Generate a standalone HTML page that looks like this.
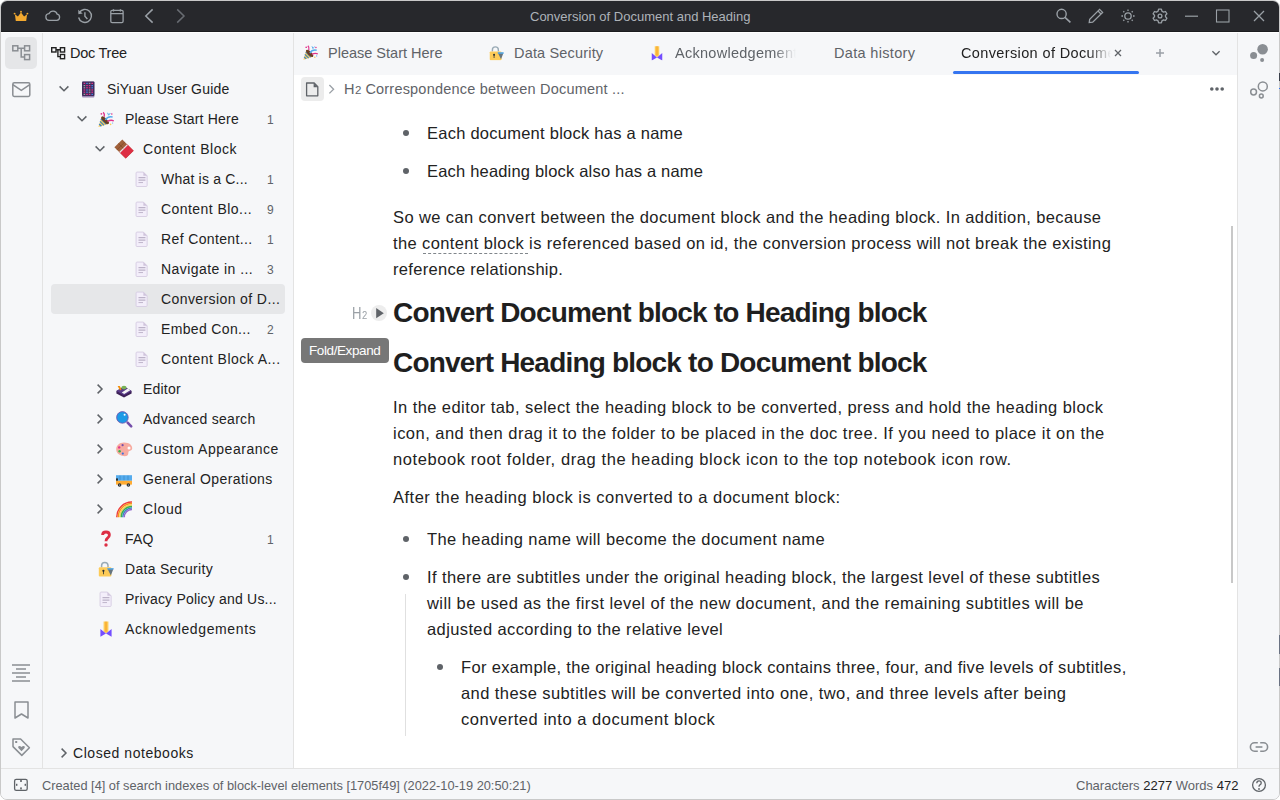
<!DOCTYPE html>
<html><head><meta charset="utf-8">
<style>
*{box-sizing:border-box;margin:0;padding:0}
html,body{width:1280px;height:800px;overflow:hidden;background:#fff}
body{position:relative;font-family:"Liberation Sans",sans-serif;color:#222}
.a{position:absolute}
.t{position:absolute;white-space:nowrap;line-height:20px}
#win{position:absolute;left:0;top:0;width:1280px;height:800px;border:1px solid #c9c9c9;border-radius:7px;overflow:hidden;background:#f6f7f9}
#bar{position:absolute;left:0;top:0;width:1278px;height:31px;background:#27282c;border-bottom:1px solid #1b1c1f}
#barhl{position:absolute;left:0;top:31px;width:1278px;height:1px;background:#fff}
.dockL{position:absolute;left:0;top:32px;width:42px;height:736px;border-right:1px solid #e3e3e3;background:#f6f7f9}
.side{position:absolute;left:42px;top:32px;width:251px;height:736px;border-right:1px solid #e3e3e3;background:#f6f7f9}
.tabs{position:absolute;left:293px;top:32px;width:944px;height:42px;background:#f6f7f9}
.editor{position:absolute;left:293px;top:74px;width:944px;height:694px;background:#fff}
.dockR{position:absolute;left:1236px;top:32px;width:42px;height:736px;border-left:1px solid #e3e3e3;background:#f6f7f9}
.status{position:absolute;left:0;top:767px;width:1278px;height:31px;border-top:1px solid #e3e3e3;background:#f6f7f9}
.tree{font-size:14px;color:#222;letter-spacing:0.2px}
.cnt{font-size:12px;color:#5f6368}
.p{font-size:16.5px;color:#222;line-height:26px;letter-spacing:0.42px}
.h2{font-size:28px;font-weight:bold;color:#1f1f1f;line-height:36px;letter-spacing:-0.8px}
.tab{font-size:14.5px;color:#5f6368}
svg{position:absolute;overflow:visible}
</style></head><body>
<div id="win">
  <div id="bar"></div>
  <div id="barhl"></div>
  <div class="dockL"></div>
  <div class="side"></div>
  <div class="tabs"></div>
  <div class="editor"></div>
  <div class="dockR"></div>
  <div class="status"></div>
</div>

<!-- title -->
<div class="t" style="left:530px;top:7px;font-size:13px;color:#aeb3b9;letter-spacing:0px">Conversion of Document and Heading</div>

<!-- sidebar header -->
<div class="t" style="left:70px;top:43px;font-size:14.5px;color:#222;letter-spacing:-0.25px">Doc Tree</div>

<!-- tree rows -->
<div class="t tree" style="left:107px;top:79px">SiYuan User Guide</div>
<div class="t tree" style="left:125px;top:109px">Please Start Here</div><div class="t cnt" style="left:267px;top:110px">1</div>
<div class="t tree" style="left:143px;top:139px;letter-spacing:0.533px">Content Block</div>
<div class="a" style="left:51px;top:284px;width:234px;height:30px;background:#e6e7e9;border-radius:4px"></div>
<div class="t tree" style="left:161px;top:169px">What is a C...</div><div class="t cnt" style="left:267px;top:170px">1</div>
<div class="t tree" style="left:161px;top:199px;letter-spacing:0.446px">Content Blo...</div><div class="t cnt" style="left:267px;top:200px">9</div>
<div class="t tree" style="left:161px;top:229px;letter-spacing:0.369px">Ref Content...</div><div class="t cnt" style="left:267px;top:230px">1</div>
<div class="t tree" style="left:161px;top:259px;letter-spacing:0.436px">Navigate in ...</div><div class="t cnt" style="left:267px;top:260px">3</div>
<div class="t tree" style="left:161px;top:289px;letter-spacing:0.400px">Conversion of D...</div>
<div class="t tree" style="left:161px;top:319px;letter-spacing:0.345px">Embed Con...</div><div class="t cnt" style="left:267px;top:320px">2</div>
<div class="t tree" style="left:161px;top:349px;letter-spacing:0.459px">Content Block A...</div>
<div class="t tree" style="left:143px;top:379px">Editor</div>
<div class="t tree" style="left:143px;top:409px;letter-spacing:0.286px">Advanced search</div>
<div class="t tree" style="left:143px;top:439px;letter-spacing:0.531px">Custom Appearance</div>
<div class="t tree" style="left:143px;top:469px;letter-spacing:0.418px">General Operations</div>
<div class="t tree" style="left:143px;top:499px;letter-spacing:0.625px">Cloud</div>
<div class="t tree" style="left:125px;top:529px">FAQ</div><div class="t cnt" style="left:267px;top:530px">1</div>
<div class="t tree" style="left:125px;top:559px;letter-spacing:0.300px">Data Security</div>
<div class="t tree" style="left:125px;top:589px">Privacy Policy and Us...</div>
<div class="t tree" style="left:125px;top:619px;letter-spacing:0.617px">Acknowledgements</div>
<div class="t tree" style="left:73px;top:743px;letter-spacing:0.547px">Closed notebooks</div>

<!-- tabs -->
<div class="t tab" style="left:328px;top:43px">Please Start Here</div>
<div class="t tab" style="left:514px;top:43px;letter-spacing:0.17px">Data Security</div>
<div class="t tab" style="left:675px;top:43px;width:121px;overflow:hidden;letter-spacing:0.27px;-webkit-mask-image:linear-gradient(to right,#000 82%,transparent 100%);mask-image:linear-gradient(to right,#000 82%,transparent 100%)">Acknowledgements</div>
<div class="t tab" style="left:834px;top:43px;letter-spacing:0.33px">Data history</div>
<div class="t tab" style="left:961px;top:43px;color:#222;width:150px;overflow:hidden;letter-spacing:0.37px;-webkit-mask-image:linear-gradient(to right,#000 85%,transparent 100%);mask-image:linear-gradient(to right,#000 85%,transparent 100%)">Conversion of Document</div>
<div class="a" style="left:953px;top:71px;width:186px;height:3px;background:#3575f0;border-radius:2px"></div>

<!-- breadcrumb -->
<div class="a" style="left:301px;top:77px;width:23px;height:24px;background:#ececec;border-radius:4px"></div>
<div class="t" style="left:344px;top:79px;font-size:14.5px;color:#5f6368">H<span style="font-size:11.5px;margin-left:0.5px">2</span><span style="margin-left:4px;letter-spacing:0.2px">Correspondence between Document ...</span></div>

<!-- editor content -->
<div class="t p" style="left:427px;top:120px;letter-spacing:0.248px">Each document block has a name</div>
<div class="t p" style="left:427px;top:158px;letter-spacing:0.190px">Each heading block also has a name</div>
<div class="t p" style="left:393px;top:204px;letter-spacing:0.399px">So we can convert between the document block and the heading block. In addition, because</div>
<div class="t p" style="left:393px;top:230px;letter-spacing:0.377px">the content block is referenced based on id, the conversion process will not break the existing</div>
<div class="t p" style="left:393px;top:256px;letter-spacing:0.302px">reference relationship.</div>
<div class="t h2" style="left:393px;top:295px">Convert Document block to Heading block</div>
<div class="t h2" style="left:393px;top:345px">Convert Heading block to Document block</div>
<div class="t p" style="left:393px;top:394px;letter-spacing:0.428px">In the editor tab, select the heading block to be converted, press and hold the heading block</div>
<div class="t p" style="left:393px;top:420px;letter-spacing:0.472px">icon, and then drag it to the folder to be placed in the doc tree. If you need to place it on the</div>
<div class="t p" style="left:393px;top:446px;letter-spacing:0.587px">notebook root folder, drag the heading block icon to the top notebook icon row.</div>
<div class="t p" style="left:393px;top:484px;letter-spacing:0.499px">After the heading block is converted to a document block:</div>
<div class="t p" style="left:427px;top:526px;letter-spacing:0.420px">The heading name will become the document name</div>
<div class="t p" style="left:427px;top:564px;letter-spacing:0.393px">If there are subtitles under the original heading block, the largest level of these subtitles</div>
<div class="t p" style="left:427px;top:590px;letter-spacing:0.419px">will be used as the first level of the new document, and the remaining subtitles will be</div>
<div class="t p" style="left:427px;top:616px;letter-spacing:0.387px">adjusted according to the relative level</div>
<div class="t p" style="left:461px;top:654px;letter-spacing:0.340px">For example, the original heading block contains three, four, and five levels of subtitles,</div>
<div class="t p" style="left:461px;top:680px;letter-spacing:0.420px">and these subtitles will be converted into one, two, and three levels after being</div>
<div class="t p" style="left:461px;top:706px;letter-spacing:0.537px">converted into a document block</div>

<!-- status -->
<div class="t" style="left:42px;top:776px;font-size:12.8px;color:#5f6368">Created [4] of search indexes of block-level elements [1705f49] (2022-10-19 20:50:21)</div>
<div class="t" style="left:1076px;top:776px;font-size:13px;color:#5f6368">Characters <span style="color:#222">2277</span> Words <span style="color:#222">472</span></div>

<!-- top bar icons -->
<svg class="a" style="left:0;top:0" width="1280" height="32" viewBox="0 0 1280 32">
  <!-- crown -->
  <path d="M14.9 14.2 L17.9 16.6 L21 12.6 L24.1 16.6 L27.1 14.2 L26.2 20.9 L15.8 20.9 Z" fill="#f3a92f"/>
  <circle cx="14.6" cy="13.6" r="0.95" fill="#f3a92f"/><circle cx="21" cy="11.8" r="0.95" fill="#f3a92f"/><circle cx="27.4" cy="13.6" r="0.95" fill="#f3a92f"/>
  <!-- cloud -->
  <path d="M49.5 20.3 H56.8 A3.1 3.1 0 0 0 57.2 14.2 A4.4 4.4 0 0 0 49 13.6 A3.3 3.3 0 0 0 49.5 20.3 Z" fill="none" stroke="#9aa0a6" stroke-width="1.3"/>
  <!-- history -->
  <path d="M79.2 12.8 A6.5 6.5 0 1 1 78.6 17.5" fill="none" stroke="#9aa0a6" stroke-width="1.4"/>
  <path d="M78.2 9.8 L78.4 14.3 L82.7 13.5 Z" fill="#9aa0a6"/>
  <path d="M84.9 12.3 V16.3 L87.4 19" fill="none" stroke="#9aa0a6" stroke-width="1.4"/>
  <!-- calendar -->
  <rect x="110.8" y="10.3" width="12.3" height="12.3" rx="1.3" fill="none" stroke="#9aa0a6" stroke-width="1.3"/>
  <path d="M110.8 13.7 H123.1 M113.5 9.2 V11.5 M120.4 9.2 V11.5" stroke="#9aa0a6" stroke-width="1.3"/>
  <!-- back / forward -->
  <path d="M152.6 9.4 L145.8 16 L152.6 22.6" fill="none" stroke="#9aa0a6" stroke-width="1.5"/>
  <path d="M177.2 9.4 L184 16 L177.2 22.6" fill="none" stroke="#686c72" stroke-width="1.5"/>
  <!-- search -->
  <circle cx="1061.6" cy="13.9" r="4.6" fill="none" stroke="#9aa0a6" stroke-width="1.4"/>
  <path d="M1065 17.3 L1070.4 22.3" stroke="#9aa0a6" stroke-width="1.6"/>
  <!-- pen -->
  <path d="M1089.2 22.5 L1089.7 19.2 L1099.6 9.4 L1102.6 12.4 L1092.7 22.2 Z" fill="none" stroke="#9aa0a6" stroke-width="1.3"/>
  <path d="M1098 11 L1101 14" stroke="#9aa0a6" stroke-width="1.3"/>
  <!-- sun -->
  <circle cx="1128" cy="16" r="3.2" fill="none" stroke="#9aa0a6" stroke-width="1.3"/>
  <path d="M1128 9.4 V11 M1128 21 V22.6 M1121.4 16 H1123 M1133 16 H1134.6 M1123.3 11.3 L1124.3 12.3 M1131.7 19.7 L1132.7 20.7 M1132.7 11.3 L1131.7 12.3 M1124.3 19.7 L1123.3 20.7" stroke="#9aa0a6" stroke-width="1.3"/>
  <!-- gear -->
  <path d="M1158.6 9.2 H1161.4 L1161.9 11.1 L1163.6 12.1 L1165.5 11.5 L1166.9 13.9 L1165.5 15.3 V16.7 L1166.9 18.1 L1165.5 20.5 L1163.6 19.9 L1161.9 20.9 L1161.4 22.8 H1158.6 L1158.1 20.9 L1156.4 19.9 L1154.5 20.5 L1153.1 18.1 L1154.5 16.7 V15.3 L1153.1 13.9 L1154.5 11.5 L1156.4 12.1 L1158.1 11.1 Z" fill="none" stroke="#9aa0a6" stroke-width="1.3" stroke-linejoin="round"/>
  <circle cx="1160" cy="16" r="1.9" fill="none" stroke="#9aa0a6" stroke-width="1.3"/>
  <!-- min / max / close -->
  <path d="M1185 16.2 H1198" stroke="#9aa0a6" stroke-width="1.2"/>
  <rect x="1216.5" y="10" width="12.5" height="12" fill="none" stroke="#9aa0a6" stroke-width="1.1"/>
  <path d="M1254 11 L1264 21 M1264 11 L1254 21" stroke="#9aa0a6" stroke-width="1.3"/>
</svg>

<svg class="a" style="left:0;top:0" width="1280" height="800" viewBox="0 0 1280 800">
<defs>
  <symbol id="doc" viewBox="0 0 16 16">
    <path d="M2.2 1.6 Q2.2 0.6 3.2 0.6 H10 L14 4.6 V15 Q14 16 13 16 H3.2 Q2.2 16 2.2 15 Z" fill="#f3eefa" stroke="#d6cde2" stroke-width="1"/>
    <path d="M10 0.6 V4.6 H14 Z" fill="#cfc4dc"/>
    <path d="M4.8 6.6 H12.2 M4.8 9.2 H12.2" stroke="#bcb2c8" stroke-width="1.3"/>
    <path d="M4.8 11.8 H9.6" stroke="#bcb2c8" stroke-width="1"/>
  </symbol>
  <symbol id="popper" viewBox="0 0 16 16">
    <path d="M0.4 15.6 L3.6 5.4 L10.6 12.4 Z" fill="#fdcb58"/>
    <path d="M1.2 12.6 L3.4 14.8 M2 10 L6 14 M2.9 7.4 L8.4 12.9" stroke="#3b88c3" stroke-width="1.3"/>
    <ellipse cx="7.1" cy="8.9" rx="2" ry="5" transform="rotate(-45 7.1 8.9)" fill="#6b3f23"/>
    <path d="M7.4 8.6 Q9.6 4.6 14.6 5.6" fill="none" stroke="#55acee" stroke-width="1.5"/>
    <path d="M6.2 5.4 Q7 2.6 5.2 0.8" fill="none" stroke="#e0348c" stroke-width="1.4"/>
    <path d="M9.4 10 Q12.6 8.2 15.8 9.4" fill="none" stroke="#e0348c" stroke-width="1.4"/>
    <path d="M9.6 1.4 L10.6 3.8 L12.4 1.6" fill="none" stroke="#55acee" stroke-width="1"/>
    <circle cx="3.4" cy="2.4" r="0.9" fill="#e0348c"/><circle cx="13.8" cy="2.6" r="0.8" fill="#e0348c"/><circle cx="12.6" cy="13" r="0.8" fill="#fdcb58"/><circle cx="14.6" cy="11.6" r="0.6" fill="#55acee"/>
  </symbol>
  <symbol id="lock" viewBox="0 0 16 16">
    <path d="M3.6 6.4 V4.6 A3.2 3.2 0 0 1 10 4.6 V6.4" fill="none" stroke="#99aab5" stroke-width="1.5"/>
    <rect x="0.8" y="6.2" width="12.6" height="9.4" rx="1" fill="#fdcb58"/>
    <circle cx="5.4" cy="9.8" r="1.1" fill="#292f33"/><path d="M5 10 H5.8 V13.2 H5 Z" fill="#292f33"/>
    <path d="M9.4 7.6 H15.4 L14.8 9.6 L12.8 14.6 L10.6 10 Z" fill="#66757f"/>
    <path d="M9.4 7.2 H15.6 V8.6 H9.4 Z" fill="#55acee"/>
  </symbol>
  <symbol id="ribbon" viewBox="0 0 16 16">
    <path d="M5.6 0.6 H10.4 V10.4 L8 12.4 L5.6 10.4 Z" fill="#fdcb58"/>
    <path d="M8 0.6 V10.6" stroke="#f4900c" stroke-width="0.8"/>
    <path d="M2.4 8 L8 12.6 L13.6 8 V15.8 L8 12.6 L2.4 15.8 Z" fill="#744eff"/>
  </symbol>
</defs>

<!-- left dock -->
<rect x="5" y="37" width="32" height="32" rx="5" fill="#e5e6e8"/>
<g fill="none" stroke="#8a8e93" stroke-width="1.5">
  <rect x="12.8" y="45.8" width="5" height="5"/>
  <rect x="24.6" y="45.8" width="5" height="5"/>
  <rect x="24.6" y="54.6" width="5" height="5"/>
  <path d="M17.8 48.3 H24.6 M21.2 48.3 V57.1 H24.6"/>
  <rect x="12.8" y="82.8" width="17" height="13.6" rx="1.4"/>
  <path d="M12.8 84.6 L21.3 90.4 L29.8 84.6"/>
  <path d="M12 665 H30 M16 669 H26 M12 673 H30 M16 677 H26 M12 681 H30"/>
  <path d="M15 702 H28 V718 L21.5 714 L15 718 Z" stroke-linejoin="round"/>
  <path d="M13 739 H20.6 L29.4 747.8 L21.8 755.4 L13 746.6 Z" stroke-linejoin="round"/>
</g>
<rect x="15.2" y="741" width="2" height="2" fill="#8a8e93"/>
<path d="M21.5 751.2 L18.6 748.3 Q17.7 747.2 18.5 746.3 Q19.8 745.3 21.5 746.9 Q23.2 745.3 24.5 746.3 Q25.3 747.2 24.4 748.3 Z" fill="#8a8e93"/>

<!-- doc tree header icon -->
<g fill="none" stroke="#222" stroke-width="1.4">
  <rect x="51.7" y="47.7" width="4.3" height="4.3"/>
  <rect x="60.4" y="47.7" width="4.2" height="4.3"/>
  <rect x="60.4" y="54.5" width="4.2" height="4.2"/>
  <path d="M56 49.8 H60.4 M57.9 49.8 V56.6 H60.4"/>
</g>

<!-- tree chevrons -->
<g fill="none" stroke="#5f6368" stroke-width="1.5">
  <path d="M59.6 86.4 L64 90.8 L68.4 86.4"/>
  <path d="M77.6 116.4 L82 120.8 L86.4 116.4"/>
  <path d="M95.6 146.4 L100 150.8 L104.4 146.4"/>
  <path d="M97.6 384.6 L102 389 L97.6 393.4"/>
  <path d="M97.6 414.6 L102 419 L97.6 423.4"/>
  <path d="M97.6 444.6 L102 449 L97.6 453.4"/>
  <path d="M97.6 474.6 L102 479 L97.6 483.4"/>
  <path d="M97.6 504.6 L102 509 L97.6 513.4"/>
  <path d="M61.6 748.6 L66 753 L61.6 757.4"/>
</g>

<!-- notebook emoji -->
<rect x="82" y="81.4" width="12.4" height="16" rx="1" fill="#9c89b5"/>
<rect x="82" y="81.4" width="12.4" height="14.6" rx="1" fill="#3f2d5c"/>
<rect x="83.6" y="82.8" width="1.6" height="1.2" fill="#e0348c"/>
<rect x="86.2" y="82.8" width="1.6" height="1.2" fill="#4a7fe0"/>
<rect x="88.8" y="82.8" width="1.6" height="1.2" fill="#9aa0a6"/>
<rect x="91.4" y="82.8" width="1.6" height="1.2" fill="#e0348c"/>
<rect x="83.6" y="85.0" width="1.6" height="1.2" fill="#9aa0a6"/>
<rect x="86.2" y="85.0" width="1.6" height="1.2" fill="#e0348c"/>
<rect x="88.8" y="85.0" width="1.6" height="1.2" fill="#e0348c"/>
<rect x="91.4" y="85.0" width="1.6" height="1.2" fill="#4a7fe0"/>
<rect x="83.6" y="87.2" width="1.6" height="1.2" fill="#9aa0a6"/>
<rect x="86.2" y="87.2" width="1.6" height="1.2" fill="#e0348c"/>
<rect x="88.8" y="87.2" width="1.6" height="1.2" fill="#e0348c"/>
<rect x="91.4" y="87.2" width="1.6" height="1.2" fill="#4a7fe0"/>
<rect x="83.6" y="89.4" width="1.6" height="1.2" fill="#e0348c"/>
<rect x="86.2" y="89.4" width="1.6" height="1.2" fill="#4a7fe0"/>
<rect x="88.8" y="89.4" width="1.6" height="1.2" fill="#9aa0a6"/>
<rect x="91.4" y="89.4" width="1.6" height="1.2" fill="#e0348c"/>
<rect x="83.6" y="91.6" width="1.6" height="1.2" fill="#e0348c"/>
<rect x="86.2" y="91.6" width="1.6" height="1.2" fill="#4a7fe0"/>
<rect x="88.8" y="91.6" width="1.6" height="1.2" fill="#9aa0a6"/>
<rect x="91.4" y="91.6" width="1.6" height="1.2" fill="#e0348c"/>
<rect x="83.6" y="93.8" width="1.6" height="1.2" fill="#9aa0a6"/>
<rect x="86.2" y="93.8" width="1.6" height="1.2" fill="#e0348c"/>
<rect x="88.8" y="93.8" width="1.6" height="1.2" fill="#e0348c"/>
<rect x="91.4" y="93.8" width="1.6" height="1.2" fill="#4a7fe0"/>
<use href="#popper" x="98" y="111.4" width="16" height="16"/>
<!-- chocolate -->
<g transform="translate(124,149) rotate(-45)">
  <rect x="-5.6" y="-8" width="11.2" height="16" fill="#a0603a"/>
  <rect x="-5.6" y="-1" width="11.2" height="9" fill="#dd2e44"/>
  <rect x="-5.6" y="-1.2" width="11.2" height="1.2" fill="#e6e7e8"/>
  <path d="M-5.6 -4.4 H5.6 M0 -8 V-1" stroke="#7c4424" stroke-width="0.6"/>
</g>
<!-- doc icons -->
<use href="#doc" x="134" y="171" width="15" height="16"/>
<use href="#doc" x="134" y="201" width="15" height="16"/>
<use href="#doc" x="134" y="231" width="15" height="16"/>
<use href="#doc" x="134" y="261" width="15" height="16"/>
<use href="#doc" x="134" y="291" width="15" height="16"/>
<use href="#doc" x="134" y="321" width="15" height="16"/>
<use href="#doc" x="134" y="351" width="15" height="16"/>
<use href="#doc" x="98" y="591" width="15" height="16"/>
<!-- editor emoji (box) -->
<g>
  <path d="M116.4 391 L124 386.6 L131.6 391 V393.6 L124 397.4 L116.4 393.6 Z" fill="#3d2157"/>
  <path d="M116.4 391 L124 386.6 L131.6 391 L124 395.2 Z" fill="#5a3c8a"/>
  <path d="M121.8 392.4 L127.8 388.6 L130.2 390.2 L124.2 394 Z" fill="#f5f5f5"/>
  <ellipse cx="124" cy="387.6" rx="2.6" ry="1.8" fill="#77b255"/>
  <path d="M117.6 386 L120 390.4 L121.6 389.2 L119.8 386" fill="#f4900c"/>
</g>
<!-- magnifier -->
<path d="M127.6 422.6 L131.2 426.4" stroke="#744eaa" stroke-width="2.6" stroke-linecap="round"/>
<circle cx="122.4" cy="417.4" r="5.8" fill="#1c9ae6" stroke="#744eaa" stroke-width="0.8"/>
<circle cx="124.6" cy="414.8" r="1" fill="#fff"/>
<!-- palette -->
<path d="M124 442.6 C129.6 442.6 132.4 445.6 132.2 448.4 C132 450.6 129.4 450.4 128.6 451.6 C128 452.6 129 454.6 127 455.8 C124.6 457.2 116.4 455.6 116.2 449.6 C116 445.4 119.6 442.6 124 442.6 Z" fill="#f7aba0"/>
<circle cx="129" cy="448" r="1.5" fill="#fff"/>
<circle cx="119.2" cy="447.4" r="1.2" fill="#e0348c"/><circle cx="122.6" cy="445.2" r="1.1" fill="#744eaa"/><circle cx="119.6" cy="451.2" r="1.2" fill="#3ab44a"/><circle cx="122.8" cy="453.6" r="1.1" fill="#3b6fe0"/>
<!-- bus -->
<rect x="116" y="475.2" width="16" height="5.6" fill="#55acee"/>
<path d="M120 475.6 V480.4 M124 475.6 V480.4 M128 475.6 V480.4" stroke="#3b88c3" stroke-width="0.7"/>
<rect x="116" y="478.4" width="2" height="2.4" fill="#292f33"/>
<rect x="116" y="480.8" width="16" height="3.8" fill="#ffac33"/>
<circle cx="119.6" cy="485" r="1.8" fill="#292f33"/><circle cx="128.4" cy="485" r="1.8" fill="#292f33"/>
<circle cx="119.6" cy="485" r="0.6" fill="#ccd6dd"/><circle cx="128.4" cy="485" r="0.6" fill="#ccd6dd"/>
<!-- rainbow -->
<g fill="none" stroke-width="1.45">
  <path d="M116.8 517.2 A15 15 0 0 1 132 502" stroke="#ef3b3b"/>
  <path d="M118.3 517.2 A13.5 13.5 0 0 1 132 503.5" stroke="#f5931e"/>
  <path d="M119.8 517.2 A12 12 0 0 1 132 505" stroke="#fdcb58"/>
  <path d="M121.3 517.2 A10.5 10.5 0 0 1 132 506.5" stroke="#3ab44a"/>
  <path d="M122.8 517.2 A9 9 0 0 1 132 508" stroke="#3b88c3"/>
  <path d="M124.3 517.2 A7.5 7.5 0 0 1 132 509.5" stroke="#9266cc"/>
</g>
<!-- question -->
<path d="M102.6 535 Q102.6 532 106 532 Q109.4 532 109.4 535 Q109.4 537 107.4 538.2 Q106 539 106 541.2" fill="none" stroke="#dd2e44" stroke-width="2.8"/>
<circle cx="106" cy="545" r="1.7" fill="#dd2e44"/>
<use href="#lock" x="98" y="561" width="16" height="16"/>
<use href="#ribbon" x="98" y="621" width="16" height="16"/>

<!-- tab emojis -->
<use href="#popper" x="303" y="45" width="15" height="15"/>
<use href="#lock" x="489" y="45.6" width="15" height="15"/>
<use href="#ribbon" x="649.5" y="45.6" width="15" height="15"/>
<!-- tab close / plus / more -->
<path d="M1115 50 L1121 56 M1121 50 L1115 56" stroke="#5f6368" stroke-width="1.3"/>
<path d="M1156 53 H1164 M1160 49 V57" stroke="#9aa0a6" stroke-width="1.5"/>
<path d="M1212.4 51.2 L1216 54.8 L1219.6 51.2" fill="none" stroke="#5f6368" stroke-width="1.3"/>

<!-- right dock -->
<g fill="#8a8e93"><circle cx="1262.6" cy="49.3" r="5.3"/><circle cx="1253.6" cy="55.5" r="3.5"/><circle cx="1262.1" cy="59.9" r="2"/></g>
<g fill="none" stroke="#8a8e93" stroke-width="1.5"><circle cx="1262.8" cy="86.4" r="4.5"/><circle cx="1253.6" cy="92" r="2.9"/><circle cx="1261.3" cy="96" r="1.9"/></g>
<g fill="none" stroke="#8a8e93" stroke-width="1.6">
  <path d="M1257.8 742.8 H1254.6 A4.2 4.2 0 0 0 1254.6 751.2 H1257.8"/>
  <path d="M1260.2 742.8 H1263.4 A4.2 4.2 0 0 1 1263.4 751.2 H1260.2"/>
  <path d="M1255.6 747 H1262.4"/>
</g>

<!-- breadcrumb -->
<g fill="none" stroke="#5f6368" stroke-width="1.3">
  <path d="M306.6 83 H314.2 L317.8 86.6 V95.8 H306.6 Z" stroke-linejoin="round"/>
  <path d="M329.4 85 L333.6 89.2 L329.4 93.4" stroke="#9aa0a6"/>
</g>
<path d="M313.6 83 L317.8 87.2 H313.6 Z" fill="#5f6368"/>
<g fill="#5f6368"><circle cx="1211.8" cy="89" r="1.8"/><circle cx="1217" cy="89" r="1.8"/><circle cx="1222.2" cy="89" r="1.8"/></g>

<!-- editor bullets -->
<g fill="#5f6368">
  <circle cx="406" cy="133" r="3"/><circle cx="406" cy="171" r="3"/>
  <circle cx="406" cy="539" r="3"/><circle cx="406" cy="577" r="3"/>
  <circle cx="440" cy="667" r="3"/>
</g>
<rect x="405" y="594" width="1" height="142" fill="#e0e0e0"/>
<!-- scrollbar -->
<rect x="1231" y="226" width="2" height="357" fill="#c8c8c8"/>

<!-- status icons -->
<g fill="none" stroke="#5f6368" stroke-width="1.3">
  <rect x="14.6" y="779.4" width="12.6" height="11" rx="1.6"/>
  <circle cx="1259" cy="785" r="6.4"/>
  <path d="M1256.8 783.2 Q1256.8 780.8 1259 780.8 Q1261.2 780.8 1261.2 782.9 Q1261.2 784.3 1259.9 784.9 Q1259 785.3 1259 786.8"/>
</g>
<g fill="#5f6368"><rect x="20.2" y="780" width="1.6" height="2"/><rect x="20.2" y="787.4" width="1.6" height="2"/><rect x="16" y="783.8" width="1.4" height="2"/><rect x="24.6" y="783.8" width="1.4" height="2"/><circle cx="1259" cy="789" r="0.9"/></g>
</svg>


<!-- H2 marker + fold + tooltip -->
<div class="t" style="left:352px;top:304px;font-size:16px;color:#9aa0a6;line-height:20px;transform:scaleX(0.82);transform-origin:0 0">H<span style="font-size:11.5px;position:relative;top:0px;margin-left:0.5px">2</span></div>
<svg class="a" style="left:0;top:0" width="1280" height="800" viewBox="0 0 1280 800">
<circle cx="379" cy="313" r="8" fill="#ededed"/>
<path d="M376.2 308 L383.8 313.2 L376.2 318.2 Z" fill="#5f6368"/>
</svg>
<div class="a" style="left:301px;top:338px;width:88px;height:25px;background:#777;border-radius:4px"></div>
<div class="t" style="left:309px;top:341px;font-size:13.5px;color:#fff;line-height:20px;letter-spacing:-0.4px">Fold/Expand</div>
<div class="a" style="left:423px;top:253px;width:105px;height:0;border-top:1px dashed #80868b"></div>

<div class="a" style="left:1279px;top:73px;width:1px;height:8px;background:#3a3f4a"></div>
<div class="a" style="left:1279px;top:88px;width:1px;height:1px;background:#3575f0"></div>
<div class="a" style="left:1279px;top:635px;width:1px;height:19px;background:#6a7282"></div>
<div class="a" style="left:1279px;top:668px;width:1px;height:18px;background:#6a7282"></div>
</body></html>
